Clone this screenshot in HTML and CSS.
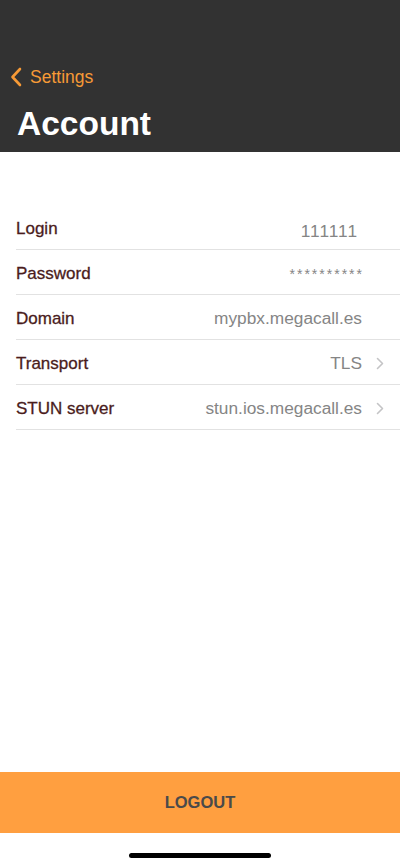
FILE: index.html
```html
<!DOCTYPE html>
<html lang="en">
<head>
<meta charset="UTF-8">
<title>Account</title>
<link rel="stylesheet" href="styles.css">
</head>
<body>
  <div class="screen">
    <div class="header">
      <div class="back">
        <svg class="back-icon" width="12" height="20" viewBox="0 0 12 20">
          <path d="M10 2 L2.5 10 L10 18" fill="none" stroke="#f79a36" stroke-width="2.6" stroke-linecap="round" stroke-linejoin="round"/>
        </svg>
        <span>Settings</span>
      </div>
      <h1 class="title">Account</h1>
    </div>

    <div class="list">
      <div class="row">
        <span class="label">Login</span>
        <span class="value login-value">111111</span>
      </div>
      <div class="row">
        <span class="label">Password</span>
        <span class="value pass-value">**********</span>
      </div>
      <div class="row">
        <span class="label">Domain</span>
        <span class="value">mypbx.megacall.es</span>
      </div>
      <div class="row">
        <span class="label">Transport</span>
        <span class="value">TLS</span>
        <svg class="chev" width="8" height="13" viewBox="0 0 8 13"><path d="M1.5 1.5 L6.5 6.5 L1.5 11.5" fill="none" stroke="#c4c4c6" stroke-width="1.6" stroke-linecap="round" stroke-linejoin="round"/></svg>
      </div>
      <div class="row">
        <span class="label">STUN server</span>
        <span class="value">stun.ios.megacall.es</span>
        <svg class="chev" width="8" height="13" viewBox="0 0 8 13"><path d="M1.5 1.5 L6.5 6.5 L1.5 11.5" fill="none" stroke="#c4c4c6" stroke-width="1.6" stroke-linecap="round" stroke-linejoin="round"/></svg>
      </div>
    </div>

    <div class="spacer"></div>

    <div class="logout">LOGOUT</div>
    <div class="home-bar"><div class="home-indicator"></div></div>
  </div>
</body>
</html>
```

FILE: styles.css
```css
* {
    box-sizing: border-box;
}

body {
    margin: 0;
    background: white;
    font-family: "Liberation Sans", Arial, sans-serif;
}

.screen {
    width: 400px;
    height: 868px;
    display: flex;
    flex-direction: column;
}

.header {
    background-color: #323232;
    height: 152px;
    padding: 66px 0 0 10px;
}

.back {
    display: flex;
    align-items: center;
    gap: 8px;
    color: #f79a36;
    font-size: 17.5px;
    height: 22px;
}

.title {
    margin: 16px 0 0 7px;
    color: white;
    font-size: 33.5px;
    font-weight: bold;
    line-height: 40px;
}

.list {
    margin-top: 53px;
    padding-left: 16px;
}

.row {
    display: flex;
    align-items: center;
    height: 45px;
    border-bottom: 1px solid #e2e2e2;
    padding: 3px 16px 0 0;
}

.label {
    flex: 1;
    color: #4a1c1c;
    font-size: 17px;
    -webkit-text-stroke: 0.3px #4a1c1c;
}

.value {
    color: #858585;
    font-size: 17.3px;
    margin-right: 22px;
}

.login-value {
    margin-right: 26px;
    margin-top: 6px;
    letter-spacing: 1px;
}

.pass-value {
    font-size: 14px;
    letter-spacing: 2px;
    margin-right: 20px;
}

.chev {
    margin-left: -8px;
}

.spacer {
    flex: 1;
}

.logout {
    height: 61px;
    background-color: #ff9f40;
    color: #4a4a4a;
    font-weight: bold;
    font-size: 16.5px;
    display: flex;
    align-items: center;
    justify-content: center;
}

.home-bar {
    height: 35px;
    display: flex;
    justify-content: center;
    padding-top: 20px;
}

.home-indicator {
    width: 142px;
    height: 5px;
    border-radius: 3px;
    background: black;
}
```
